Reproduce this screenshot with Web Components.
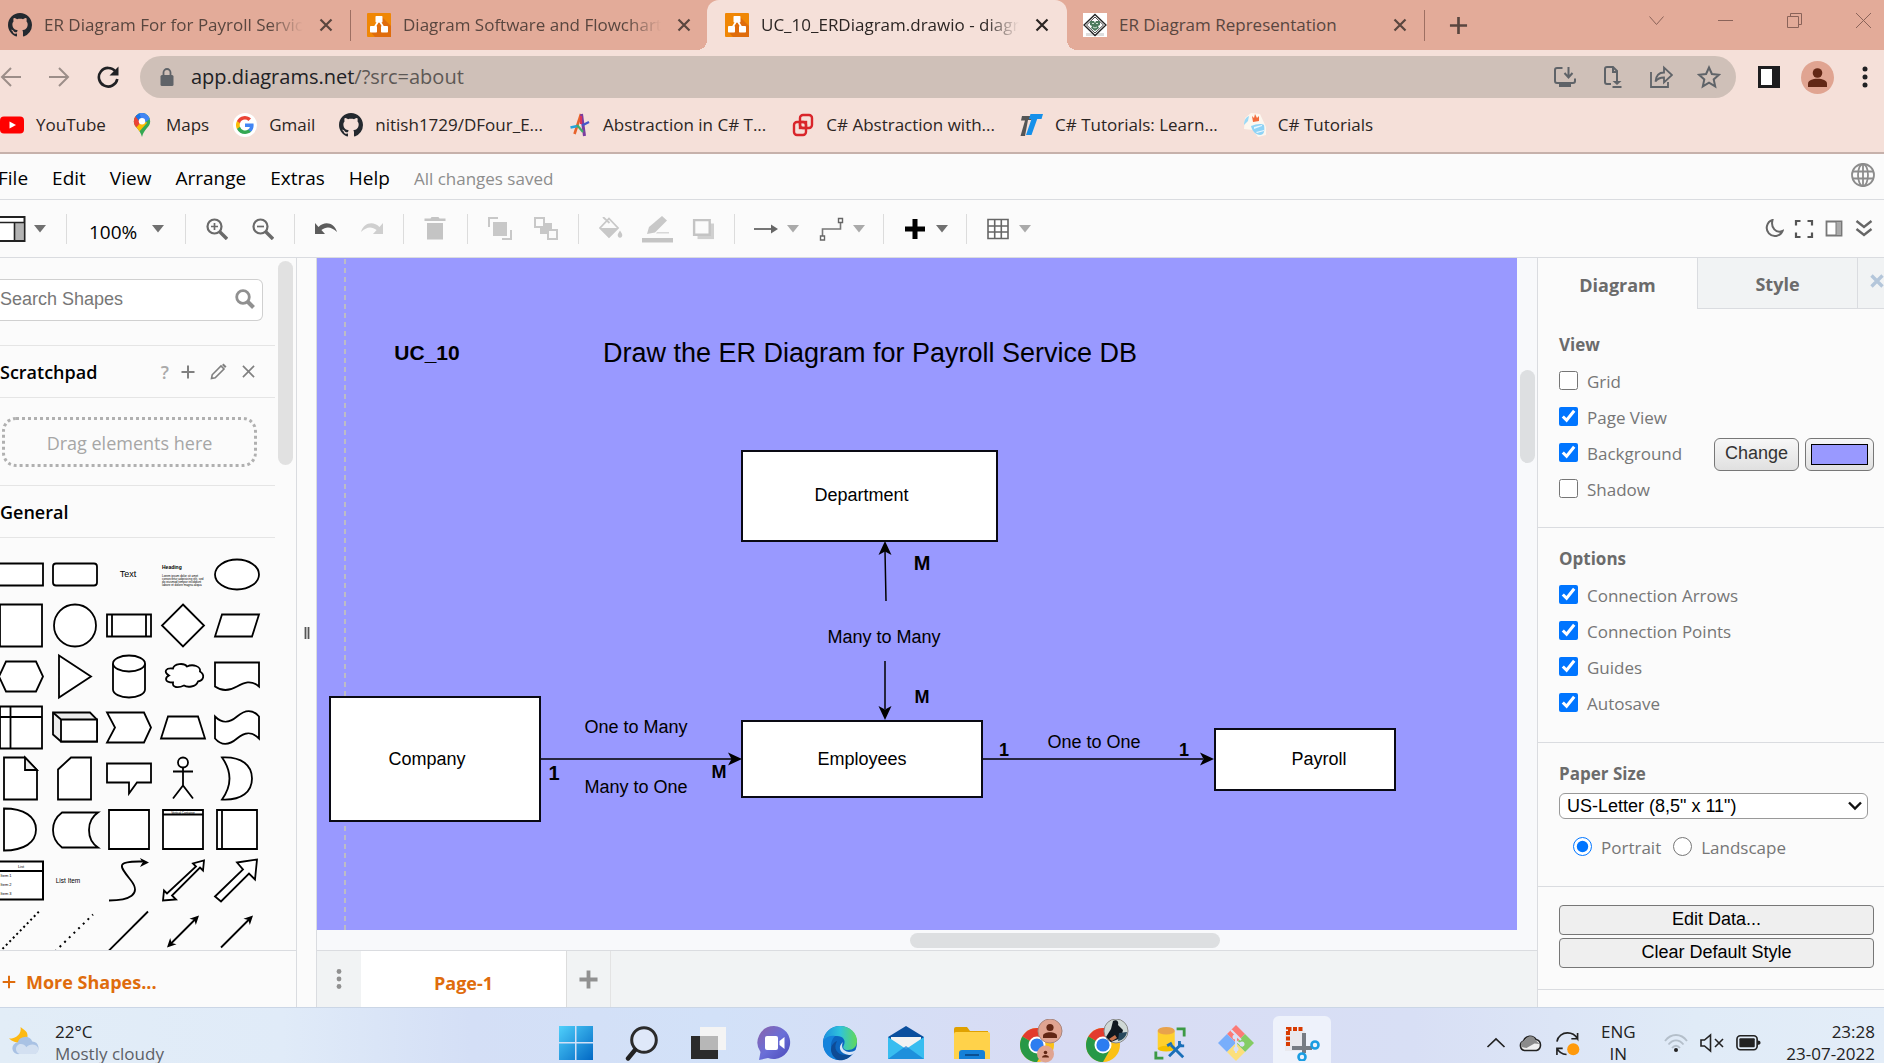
<!DOCTYPE html>
<html lang="en">
<head>
<meta charset="utf-8">
<title>UC_10_ERDiagram.drawio - diagrams.net</title>
<style>
  html, body { margin: 0; height: 100%; overflow: hidden; }
  body {
    --ui: "Open Sans", "Noto Sans", sans-serif;
    --arial: "Liberation Sans", Arial, sans-serif;
    --line: #dadce0;
    font-family: var(--ui);
    font-size: 17px;
    color: #000;
  }
</style>
</head>
<body>
<desktop-screen></desktop-screen>

<script>
const ICONS = {
  github: ['0 0 16 16', '<path fill="#24292f" d="M8 0C3.58 0 0 3.58 0 8c0 3.54 2.29 6.53 5.47 7.59.4.07.55-.17.55-.38 0-.19-.01-.82-.01-1.49-2.01.37-2.53-.49-2.69-.94-.09-.23-.48-.94-.82-1.13-.28-.15-.68-.52-.01-.53.63-.01 1.08.58 1.23.82.72 1.21 1.87.87 2.33.66.07-.52.28-.87.51-1.07-1.78-.2-3.64-.89-3.64-3.95 0-.87.31-1.59.82-2.15-.08-.2-.36-1.02.08-2.12 0 0 .67-.21 2.2.82.64-.18 1.32-.27 2-.27s1.36.09 2 .27c1.53-1.04 2.2-.82 2.2-.82.44 1.1.16 1.92.08 2.12.51.56.82 1.27.82 2.15 0 3.07-1.87 3.75-3.65 3.95.29.25.54.73.54 1.48 0 1.07-.01 1.93-.01 2.2 0 .21.15.46.55.38A8.01 8.01 0 0 0 16 8c0-4.42-3.58-8-8-8z"/>'],
  drawio: ['0 0 24 24', '<rect width="24" height="24" rx="1" fill="#f08705"/><path fill="#df6c0c" d="M14.5 3.500 24 13v11H8l-4.500-5 6-6z"/><path stroke="#fff" stroke-width="1.800" fill="none" d="m12 7-5.500 9M12 7l5.500 9"/><g fill="#fff"><rect x="8.500" y="3" width="7" height="6.500" rx=".8"/><rect x="3" y="13" width="7" height="6.500" rx=".8"/><rect x="14" y="13" width="7" height="6.500" rx=".8"/></g>'],
  erd: ['0 0 24 24', '<path fill="#fff" d="M0 0h24v24H0z"/><path fill="#ddd" d="M3 20h18v3H3z"/><path fill="#fff" stroke="#222" stroke-width="1.300" d="m12 1.500 11 10.500-11 10.500L1 12z"/><path fill="none" stroke="#444" d="m12 4 8.500 8-8.500 8-8.500-8z"/><path fill="#4c7a5c" d="M7 8h4l1 2 1-2h4v4l-2 1 1 2-4 3-4-3 1-2-2-1z"/><path fill="none" stroke="#cfe3d4" d="M9 10.500h2M13 10.500h2M10 14l2 1 2-1"/>'],
  youtube: ['0 0 24 24', '<rect x="0" y="3.500" width="24" height="17" rx="4" fill="#f00"/><path fill="#fff" d="m9.500 8.500 6.500 3.500-6.500 3.500z"/>'],
  maps: ['0 0 24 24', '<clipPath id="p"><path d="M12 0a8.200 8.200 0 0 0-8.200 8.200c0 6.300 6.300 7.300 8.200 15.800 1.900-8.500 8.200-9.500 8.200-15.800A8.200 8.200 0 0 0 12 0z"/></clipPath><g clip-path="url(#p)"><path fill="#34a853" d="M0 0h24v24H0z"/><path fill="#fbbc04" d="M2 14 12 3l5 7L7 21H0z"/><path fill="#ea4335" d="M0 2h7l5 6-7 8H0z"/><path fill="#1a73e8" d="M5 3 9-1h6l-5 10z"/><path fill="#4285f4" d="M9-1h9l3 6-8 6z"/></g><circle cx="12" cy="8.200" r="3.200" fill="#fff"/>'],
  google: ['0 0 24 24', '<circle cx="12" cy="12" r="12" fill="#fff"/><g transform="translate(3 3) scale(.75)"><path fill="#4285f4" d="M23.500 12.300c0-.8-.1-1.600-.2-2.300H12v4.500h6.500a5.500 5.500 0 0 1-2.400 3.600v3h3.900c2.200-2.100 3.500-5.200 3.500-8.800z"/><path fill="#34a853" d="M12 24c3.200 0 6-1.100 8-2.900l-3.900-3a7.200 7.200 0 0 1-10.800-3.800h-4v3.100A12 12 0 0 0 12 24z"/><path fill="#fbbc05" d="M5.300 14.300a7.200 7.200 0 0 1 0-4.600V6.600h-4a12 12 0 0 0 0 10.800z"/><path fill="#ea4335" d="M12 4.800c1.800 0 3.300.6 4.600 1.800L20 3.200A12 12 0 0 0 1.300 6.600l4 3.100A7.200 7.200 0 0 1 12 4.800z"/></g>'],
  alpha: ['0 0 24 24', '<path fill="none" stroke="#e8632c" stroke-width="2.600" d="M14 1 7.500 21"/><path fill="none" stroke="#7b3fa0" stroke-width="3" d="m14.500 1 3 22"/><path fill="none" stroke="#24a3dc" stroke-width="2.600" d="m3.500 14.500 7-1.500"/><path fill="none" stroke="#3fae6a" stroke-width="2.200" d="m10 12 6 7"/><path fill="none" stroke="#4558c9" stroke-width="2.200" d="M15 12.500 22 9"/><path fill="none" stroke="#d8375c" stroke-width="2.200" d="M14 3v8"/>'],
  redbox: ['0 0 24 24', '<g fill="none" stroke="#d9252a" stroke-width="2.400"><rect x="10" y="2" width="12" height="13" rx="3"/><rect x="4" y="9" width="12" height="13" rx="3"/><rect x="10" y="9" width="6" height="6"/></g>'],
  tt: ['0 0 24 24', '<path fill="#555" d="M3 3h11l-1.500 4h-3.500L6 23H1.500L6 7.500H2z"/><path fill="#1590ea" d="M11.500 1H24l-1.500 5h-4.300L12.500 22H7l5.500-16H10z"/>'],
  csharp: ['0 0 24 24', '<path fill="#fdf7ef" d="M3 5 9 0l9 1 6 13v8l-8 2-5-7-9-1z"/><path fill="#8fd3f6" d="M9 13c5-2 10-3 13-1 1 6 0 10-4 10s-8-4-9-9z"/><path fill="#f36c3d" d="m10 3 2 2 1-4 2 4 2-2v5l-6 1z"/><path fill="#9bdaf7" d="M2 12c0-5 2-8 5-9l-1 5z"/><path fill="#eaf7fe" d="M12 14l8-2v1l-8 3zM14 19l8-2v1l-7 2z"/>'],
  x: ['0 0 14 14', '<path stroke="currentColor" stroke-width="2.200" d="m1.500 1.500 11 11m0-11-11 11"/>'],
  boldx: ['0 0 14 14', '<path stroke="currentColor" stroke-width="3.400" d="m1.500 1.500 11 11m0-11-11 11"/>'],
  plus: ['0 0 20 20', '<path stroke="currentColor" stroke-width="2.800" d="M10 1v18M1 10h18"/>'],
  wchev: ['0 0 15 15', '<path fill="none" stroke="currentColor" d="m.5 3.500 7 8 7-8"/>'],
  wmin: ['0 0 15 15', '<path stroke="currentColor" d="M0 7.500h15"/>'],
  wmax: ['0 0 15 15', '<path fill="none" stroke="currentColor" d="M.5 3.500h11v11H.5zM3.500 3.500v-3h11v11h-3"/>'],
  wclose: ['0 0 15 15', '<path stroke="currentColor" d="m0 0 15 15m0-15L0 15"/>'],
  back: ['0 0 22 22', '<path fill="none" stroke="currentColor" stroke-width="2" d="M21 11H3m8-9-9 9 9 9"/>'],
  forward: ['0 0 22 22', '<path fill="none" stroke="currentColor" stroke-width="2" d="M1 11h18M11 2l9 9-9 9"/>'],
  reload: ['0 0 24 24', '<path fill="none" stroke="currentColor" stroke-width="2.600" d="M19.500 6.500A9.300 9.300 0 1 0 21.300 14"/><path fill="currentColor" d="M22.500 1.500v9h-9z"/>'],
  lock: ['0 0 14 18', '<path fill="currentColor" d="M2 7h10q1.500 0 1.500 1.500v8Q13.500 18 12 18H2Q.5 18 .5 16.500v-8Q.5 7 2 7z"/><path fill="none" stroke="currentColor" stroke-width="1.800" d="M3.500 8V4.500a3.500 3.500 0 0 1 7 0V8"/>'],
  install: ['0 0 24 24', '<path fill="none" stroke="currentColor" stroke-width="2" d="M9.500 3H4Q2 3 2 5v11q0 2 2 2h16q2 0 2-2v-2.500M15.500 2v10m-4-4 4 4.500 4-4.500"/><path fill="currentColor" d="M6 18h12v4H6z"/>'],
  docdown: ['0 0 24 24', '<path fill="none" stroke="currentColor" stroke-width="2" d="M10 19H6q-2 0-2-2V4q0-2 2-2h6l4 4v7M12 2v5h4"/><path fill="currentColor" d="M15 12h2v4h3.500L16 20l-4.500-4H15zM11.500 21h9v2h-9z"/>'],
  share: ['0 0 24 24', '<path fill="none" stroke="currentColor" stroke-width="1.800" d="M2 7v15h17v-5"/><path fill="none" stroke="currentColor" stroke-width="1.800" d="M6.500 16.500C7 11 10 7.500 15 7.500V2.500l8 7.500-8 7.500V12.500c-4 0-6.500 1-8.500 4z"/>'],
  star: ['0 0 24 24', '<path fill="none" stroke="currentColor" stroke-width="2" d="m12 2.500 2.900 6.500 7.100.7-5.300 4.700 1.500 7-6.200-3.700-6.200 3.700 1.500-7L2 9.700 9.100 9z"/>'],
  sidepanel: ['0 0 22 22', '<path fill="#1d1d1f" d="M0 0h22v22H0z"/><path fill="#fff" d="M3 3h11v16H3z"/>'],
  avatar: ['0 0 33 33', '<circle cx="16.500" cy="16.500" r="16.500" fill="#e0a491"/><circle cx="16.500" cy="12" r="4.800" fill="#622715"/><path fill="#622715" d="M7 26v-3.500c0-3 4.500-4.700 9.500-4.700s9.500 1.700 9.500 4.700V26z"/>'],
  dots: ['0 0 6 22', '<g fill="currentColor"><circle cx="3" cy="3" r="2.500"/><circle cx="3" cy="11" r="2.500"/><circle cx="3" cy="19" r="2.500"/></g>'],
  globe: ['0 0 24 24', '<g fill="none" stroke="#8c8c8c" stroke-width="1.800"><circle cx="12" cy="12" r="11"/><ellipse cx="12" cy="12" rx="5" ry="11"/><path d="M12 1v22M1.500 8.500h21M1.500 15.500h21" /></g>'],
  layout: ['0 0 26 26', '<path fill="#fff" stroke="#222" stroke-width="2" d="M-4 1h28.500v24H-4z"/><path fill="#b3b3b3" d="M15 7h8.500v17h-8.500z"/><path stroke="#222" stroke-width="1.600" d="M0 6.500h25M14.500 6.500V25"/>'],
  caret: ['0 0 12 8', '<path fill="currentColor" d="M0 0h12L6 7.500z"/>'],
  zoomin: ['0 0 22 22', '<circle cx="8.500" cy="8.500" r="7" fill="none" stroke="#6a6a6a" stroke-width="2.200"/><path stroke="#6a6a6a" stroke-width="3.400" d="m13.500 13.500 7.500 7.500"/><path stroke="#6a6a6a" stroke-width="1.700" d="M8.500 5v7M5 8.500h7"/>'],
  zoomout: ['0 0 22 22', '<circle cx="8.500" cy="8.500" r="7" fill="none" stroke="#6a6a6a" stroke-width="2.200"/><path stroke="#6a6a6a" stroke-width="3.400" d="m13.500 13.500 7.500 7.500"/><path stroke="#6a6a6a" stroke-width="1.700" d="M5 8.500h7"/>'],
  undo: ['0 0 24 24', '<path fill="#5c5c5c" d="M1 6v11h10l-3.600-4c5-4 10-3.500 15.600 2C20.500 6 11 3.500 4.500 10z"/>'],
  redo: ['0 0 24 24', '<path fill="#cfcfcf" d="M23 6v11H13l3.600-4C11.600 9 6.600 9.500 1 15 3.500 6 13 3.500 19.500 10z"/>'],
  trash: ['0 0 24 24', '<path fill="#c4c4c4" d="M1.500 1.500h6l1-1.500h7l1 1.500h6V4h-21zM4 6h16v16.500H4z"/>'],
  front: ['0 0 24 24', '<path fill="#c8c8c8" d="M5 5h14v14H5z"/><path fill="none" stroke="#c8c8c8" stroke-width="2" d="M10 1H1v9M14 22h9v-9"/>'],
  tback: ['0 0 24 24', '<path fill="#c8c8c8" d="M6 6h12v11H6z"/><path fill="#fbfbfb" stroke="#c8c8c8" stroke-width="2" d="M1 1h9v9H1zM14 13h9v9h-9z"/>'],
  fill: ['0 0 24 24', '<path fill="none" stroke="#c8c8c8" stroke-width="1.800" d="M4 0l6.500 6M10 1.500 19 11l-9 9-9-9z"/><path fill="#c8c8c8" d="M1 11h18l-9 9.500zM21 13.500c1.500 2.500 3 4 2 6-1 1.700-3 1.700-4 0-1-2 .5-3.500 2-6z"/>'],
  pen: ['0 0 32 28', '<path fill="#c8c8c8" d="m6 19 2-7L21 1l5 4.500-12 12z"/><path fill="#d8d8d8" d="M16 17h12v1.500H15z"/><path fill="#c4c4c4" d="M1 23h31v4.500H1z"/>'],
  shadow: ['0 0 24 24', '<path fill="#d0d0d0" d="M6 6h18v17H6z"/><path fill="#fbfbfb" stroke="#c4c4c4" stroke-width="2.600" d="M2.300 2.300h17v16h-17z"/>'],
  arrow: ['0 0 26 24', '<path stroke="#666" stroke-width="1.800" d="M1 12h19"/><path fill="#666" d="m18 7.500 7 4.500-7 4.500z"/>'],
  way: ['0 0 26 26', '<path fill="none" stroke="#777" stroke-width="1.600" d="M3.500 20v-7h18V6.500"/><path fill="#fff" stroke="#666" stroke-width="1.400" d="M1.500 20h4v4h-4zM19.500 2.500h4v4h-4z"/>'],
  bold: ['0 0 26 24', '<path stroke="#000" stroke-width="5" d="M13 2v20M3 12h20"/>'],
  table: ['0 0 26 24', '<path fill="#fff" stroke="#666" stroke-width="1.600" d="M3 2.500h20v19H3zM3 9h20M3 15h20M9.700 2.500v19M16.300 2.500v19"/>'],
  moon: ['0 0 20 20', '<path fill="none" stroke="#666" stroke-width="2" d="M8.500 1A8.200 8.200 0 1 0 18.500 12C12 14.500 6.500 9 8.500 1z"/>'],
  full: ['0 0 20 20', '<path fill="none" stroke="#555" stroke-width="2.200" d="M2 6.500V2h4.500M13.500 2H18v4.500M18 13.500V18h-4.500M6.500 18H2v-4.500"/>'],
  format: ['0 0 20 20', '<path fill="#fff" stroke="#777" stroke-width="1.800" d="M2.500 2.500h15v14h-15z"/><path fill="#aaa" stroke="#777" d="M12 2.500h5.500v14H12z"/>'],
  collapse: ['0 0 20 20', '<path fill="none" stroke="#666" stroke-width="2.400" d="m2.500 2 7.500 6 7.500-6M2.500 10l7.500 6 7.500-6"/>'],
  search: ['0 0 20 20', '<circle cx="8" cy="8" r="6.300" fill="none" stroke="#909090" stroke-width="2.800"/><path stroke="#909090" stroke-width="4" d="m12.500 12.500 6 6"/>'],
  thinplus: ['0 0 14 14', '<path stroke="#808080" stroke-width="2" d="M7 .5v13M.5 7h13"/>'],
  pencil: ['0 0 17 17', '<path fill="none" stroke="#808080" stroke-width="1.600" d="m1.500 15.500.7-3.700L11 3l3 3-8.800 8.800z"/><path fill="#808080" d="m12 2 1.500-1.500 3 3L15 5z"/>'],
  thinx: ['0 0 14 14', '<path stroke="#808080" stroke-width="1.800" d="m1 1 12 12m0-12L1 13"/>'],
  grip: ['0 0 6 12', '<path stroke="#555" stroke-width="1.800" d="M1.500 0v12M4.500 0v12"/>'],
  dotsgrey: ['0 0 6 22', '<g fill="#909090"><circle cx="3" cy="3.500" r="2.400"/><circle cx="3" cy="11" r="2.400"/><circle cx="3" cy="18.500" r="2.400"/></g>'],
  pageplus: ['0 0 20 20', '<path stroke="#919191" stroke-width="4" d="M10 .5v19M.5 10h19"/>'],
  selchev: ['0 0 14 10', '<path fill="none" stroke="#111" stroke-width="2.400" d="m1 1.500 6 6 6-6"/>'],
  weather: ['0 0 34 34', '<path fill="#fdb913" d="M13 2c4 4 8 4 7 11-1 6-11 8-19 1 8 0 13-5 12-12z"/><path fill="#a9c2e4" d="M11 30a6 6 0 0 1-1-12 8 8 0 0 1 15-1 6.700 6.700 0 0 1 2 13z"/><path fill="#d3e0f1" d="M12 30a5.500 5.500 0 0 1-1-10c3-1 6 0 8 3 3-4 11-4 12.500 2-.5 4-3 5-5.500 5z"/>'],
  windows: ['0 0 36 36', '<linearGradient id="w" x2="1" y2="1"><stop stop-color="#4fd0fb"/><stop offset="1" stop-color="#0268c4"/></linearGradient><path fill="url(#w)" d="M1 1h16v16H1zM18.500 1H35v16H18.500zM1 18.500h16V35H1zM18.500 18.500H35V35H18.500z"/>'],
  wsearch: ['0 0 36 36', '<circle cx="20" cy="15" r="12.300" fill="#e7edfa" fill-opacity=".6" stroke="#2b2b2b" stroke-width="3"/><path stroke="#222" stroke-width="4.400" stroke-linecap="round" d="m11 25-7 8.500"/>'],
  tasks: ['0 0 36 36', '<path fill="#2b2b2b" d="M1 11h27v23H1z"/><path fill="#f4f4f4" d="M10 2h26v23H10z"/><path fill="#b7b7b7" d="M10 11h18v14H10z"/>'],
  chat: ['0 0 36 36', '<linearGradient id="c" x2="1" y2="1"><stop stop-color="#8d62a8"/><stop offset=".5" stop-color="#6a6fd8"/><stop offset="1" stop-color="#4b48b8"/></linearGradient><path fill="url(#c)" d="M18 1a16.500 16.500 0 1 1-6 32l-9 2 1.500-8A16.500 16.500 0 0 1 18 1z"/><rect x="9" y="11" width="13" height="14" rx="2" fill="#fff"/><path fill="#fff" d="m23.500 16 5-4v12l-5-4z"/>'],
  edge: ['0 0 36 36', '<linearGradient id="e" x2="1"><stop stop-color="#1c8fe0"/><stop offset=".5" stop-color="#2fc3dc"/><stop offset="1" stop-color="#62d957"/></linearGradient><circle cx="18" cy="18" r="17" fill="#0c66c0"/><path fill="url(#e)" d="M1 17C2 7 9 1 18 1c10 0 17 7 17 15 0 6-4 9-9 9-4 0-6-2-4-5 2-5-1-9-7-9-7 0-12 2-14 6z"/><path fill="#1583dc" d="M1 18c1-5 6-8 12-7-6 6-6 18 5 24C8 35 1 28 1 18z"/><path fill="#0e4b95" d="M15 16c-5 9 2 17 15 13-3 5-9 7-14 6-8-4-10-15-1-19z"/><path fill="#d9e4f7" d="M21 17c-2 4-1 9 6 10 3 0 5-1 7-2-2 4-4 5-7 5-9-1-12-8-6-13z"/>'],
  mail: ['0 0 36 36', '<path fill="#0a4f9e" d="M0 12 18 1l18 11v6H0z"/><path fill="#f3f3f3" d="M3 12h30v12H3z"/><path fill="#38bdf0" d="m0 12 18 12 18-12v22H0z"/><path fill="#1682d6" d="m0 34 18-13 18 13z" opacity=".75"/>'],
  folder: ['0 0 36 36', '<path fill="#e0a100" d="M0 4q0-2 2-2h11l3 4h18v10H0z"/><path fill="#ffd24a" d="M0 9q0-2 2-2h32q2 0 2 2v25H0z"/><path fill="#1480d8" d="M5 34v-6q0-3 3-3h20q3 0 3 3v6z"/><path fill="#0b4f91" d="M11 29h14v2H11z"/>'],
  chromeA: ['0 0 44 44', '<g transform="translate(1 9)"><circle cx="17" cy="17" r="17" fill="#fbc116"/><path fill="#e33b2e" d="M17 17 2.300 8.500a17 17 0 0 1 29.400 0z"/><path fill="#279847" d="M17 17 2.300 8.500A17 17 0 0 0 17 34l8-14z"/><circle cx="17" cy="17" r="8.500" fill="#fff"/><circle cx="17" cy="17" r="6.600" fill="#2d7df0"/></g><circle cx="31" cy="12" r="12" fill="#e0a491" stroke="#a8877f"/><circle cx="31" cy="8.500" r="3.600" fill="#622715"/><path fill="#622715" d="M24 19v-2c0-5 14-5 14 0v2z"/><circle cx="26.500" cy="35" r="8.500" fill="#e0a491"/><circle cx="26.500" cy="33.500" r="1.800" fill="#622715"/><path fill="#622715" d="M23 38.500c0-3.500 7-3.500 7 0z"/>'],
  chromeB: ['0 0 44 44', '<g transform="translate(1 9)"><circle cx="17" cy="17" r="17" fill="#fbc116"/><path fill="#e33b2e" d="M17 17 2.300 8.500a17 17 0 0 1 29.400 0z"/><path fill="#279847" d="M17 17 2.300 8.500A17 17 0 0 0 17 34l8-14z"/><circle cx="17" cy="17" r="8.500" fill="#fff"/><circle cx="17" cy="17" r="6.600" fill="#2d7df0"/></g><circle cx="31" cy="12" r="12" fill="#cfd8d6" stroke="#888"/><path fill="#101820" d="M28 2c4-2 6 1 5 4l5 5-2 8-10 4-5-5 5-8z"/><path fill="#27485c" d="M34 14c3 0 5-1 8-1-1 5-4 8-9 9z"/><path fill="#c9744d" d="m24 20 6-4 2 3-5 3z"/>'],
  ssms: ['0 0 36 36', '<path fill="#ffd02e" d="M5 5h18v19H5z"/><ellipse cx="14" cy="24" rx="9" ry="3" fill="#f5c000"/><ellipse cx="14" cy="5" rx="9" ry="4" fill="#e8a24c"/><path fill="none" stroke="#3c9a45" stroke-width="3" d="M25 3h8v8M3 27v7h8"/><path stroke="#1a6fb8" stroke-width="3" d="m17 32 13-13M19 20l13 13"/><path fill="none" stroke="#1a6fb8" stroke-width="3" d="M15 21l5-3M28 16v5h5"/>'],
  git: ['0 0 36 36', '<path fill="#fb7a76" d="m18 0 9 9-9 9-9-9z"/><path fill="#78aefb" d="m9 9 9 9-9 9-9-9z"/><path fill="#83cc64" d="m27 9 9 9-9 9-9-9z"/><path fill="#fbdf7c" d="m18 18 9 9-9 9-9-9z"/><path fill="none" stroke="#d9e1f6" stroke-width="2" d="m13 5 10 10m-5 13V14m0 2 7 5"/><g fill="#d9e1f6"><circle cx="17" cy="12" r="2.500"/><circle cx="24" cy="19" r="2.500"/><circle cx="18" cy="24" r="2.500"/></g>'],
  snip: ['0 0 36 36', '<path fill="#e9e9ee" d="M1 6h20v20H1z"/><path fill="none" stroke="#d83b01" stroke-width="4" stroke-dasharray="4 1.500" d="M4 21V4h15"/><path stroke="#777c84" stroke-width="4" d="M20 8v20M8 23h20"/><g fill="none" stroke="#1b9de2" stroke-width="2.600"><circle cx="31" cy="20" r="3.500"/><circle cx="18" cy="32" r="3.500"/></g>'],
  tchev: ['0 0 20 20', '<path fill="none" stroke="#222" stroke-width="1.700" d="m1.500 14 8.500-8 8.500 8"/>'],
  cloud: ['0 0 24 18', '<path fill="#f0f0f0" stroke="#222" stroke-width="1.600" d="M6 16.500A5 5 0 0 1 5 7a7 7 0 0 1 12.500-1.500A5.700 5.700 0 0 1 18 16.500z"/><path fill="#8b8b8b" d="M2.500 9C4 6.500 6 7 8 4c4-3.500 8-1 9 2l4 4-5-.5L8 14l-5-1z"/>'],
  update: ['0 0 26 26', '<path fill="none" stroke="#222" stroke-width="1.700" d="M2 11C3 5 8 2 13 2c5 0 8 2 10.500 6V2m0 6H17M2 25v-7h6M2 18c2 4 5 6 10 6.500"/><circle cx="19" cy="19" r="6.300" fill="#ff9a0c"/>'],
  wifi: ['0 0 24 20', '<g fill="none" stroke="#b4bfca" stroke-width="1.800"><path d="M1 8c6-8 16-8 22 0M4.500 11.500c4.500-5.500 10.500-5.500 15 0M8 15c2.500-3 5.500-3 8 0"/></g><circle cx="12" cy="17" r="2" fill="#222"/>'],
  mute: ['0 0 24 20', '<path fill="none" stroke="#222" stroke-width="1.600" d="M1 7v6h3.500l6 5V2l-6 5zM15 6l8 8m0-8-8 8"/>'],
  battery: ['0 0 26 18', '<rect x="1" y="1.500" width="21" height="14.500" rx="3.500" fill="none" stroke="#222" stroke-width="1.700"/><rect x="3.500" y="4" width="16" height="9.500" rx="1" fill="#222"/><path fill="#222" d="M22.500 6.500q3 0 3 2.200t-3 2.200z"/>']
};

const define = (name, css, html) => customElements.define(name, class extends HTMLElement {
  constructor() {
    super();
    const root = this.attachShadow({ mode: 'open' });
    const t = document.createElement('template');
    t.innerHTML = `<style>*{box-sizing:border-box}${css}</style>` + (typeof html === 'function' ? html(this) : html);
    root.append(t.content.cloneNode(true));
  }
});

/* <ui-icon name w h> draws one glyph of the set above. */
customElements.define('ui-icon', class extends HTMLElement {
  connectedCallback() {
    if (this.shadowRoot) return;
    const root = this.attachShadow({ mode: 'open' });
    const [box, body] = ICONS[this.getAttribute('name')];
    const w = this.getAttribute('w') || 24, h = this.getAttribute('h') || w;
    root.innerHTML = `<style>:host{display:inline-flex;flex:none}svg{display:block}</style><svg width="${w}" height="${h}" viewBox="${box}" aria-hidden="true">${body}</svg>`;
  }
});

const BTN = 'button{border:0;background:none;padding:0;margin:0;font:inherit;color:inherit;display:flex;align-items:center;justify-content:center}';

/* ---------- browser ---------- */
define('browser-tab', `
  :host{display:flex;align-items:center;position:relative;flex:0 1 358px;min-width:0;height:50px;padding:0 18px 0 16px;gap:12px;color:#59463f}
  :host([first]){flex-basis:351px;padding-left:8px}
  :host([active]){flex-basis:360px;margin-left:-2px;padding-left:18px;background:#f5e0d9;color:#2b2523;border-radius:12px 12px 0 0;z-index:1}
  :host([active])::before,:host([active])::after{content:"";position:absolute;bottom:0;width:10px;height:10px}
  :host([active])::before{left:-10px;background:radial-gradient(circle at 0 0,transparent 10px,#f5e0d9 10px)}
  :host([active])::after{right:-10px;background:radial-gradient(circle at 100% 0,transparent 10px,#f5e0d9 10px)}
  .t{flex:1;overflow:hidden;white-space:nowrap;line-height:28px}
  :host([fade]) .t{-webkit-mask:linear-gradient(90deg,#000 calc(100% - 34px),transparent);mask:linear-gradient(90deg,#000 calc(100% - 34px),transparent)}
  .s{position:absolute;right:0;top:10px;height:31px;width:1px;background:#9d6f62;display:none}
  :host([rule]) .s{display:block}
  ${BTN} button{margin-left:4px}`,
  '<slot name="icon"></slot><span class="t"><slot></slot></span><button aria-label="Close tab"><ui-icon name="x" w="14"></ui-icon></button><span class="s"></span>');

define('tab-strip', `
  :host{display:flex;background:#e3ab99;height:50px;color:#59463f}
  ${BTN}
  .new{width:66px;flex:none}
  .win{margin-left:auto;display:flex;gap:54px;padding:0 13px 9px 0;align-items:center;color:#8a6359}`,
  `<browser-tab first rule fade><ui-icon slot="icon" name="github" w="24"></ui-icon>ER Diagram For for Payroll Service</browser-tab>
   <browser-tab fade><ui-icon slot="icon" name="drawio" w="24"></ui-icon>Diagram Software and Flowchart</browser-tab>
   <browser-tab active fade><ui-icon slot="icon" name="drawio" w="24"></ui-icon>UC_10_ERDiagram.drawio - diagrams.net</browser-tab>
   <browser-tab rule><ui-icon slot="icon" name="erd" w="24"></ui-icon>ER Diagram Representation</browser-tab>
   <button class="new" aria-label="New tab"><ui-icon name="plus" w="19"></ui-icon></button>
   <div class="win">
     <button aria-label="Search tabs"><ui-icon name="wchev" w="15"></ui-icon></button>
     <button aria-label="Minimize"><ui-icon name="wmin" w="15"></ui-icon></button>
     <button aria-label="Restore"><ui-icon name="wmax" w="15"></ui-icon></button>
     <button aria-label="Close"><ui-icon name="wclose" w="15"></ui-icon></button>
   </div>`);

define('address-bar', `
  :host{display:flex;align-items:center;background:#f5e0d9;height:48px;padding:6px 9px 0 0;color:#202124}
  ${BTN}
  .nav{display:flex;gap:26px;color:#9c8e89;margin-right:20px}
  .nav button:last-child{color:#202124}
  .pill{flex:1;height:42px;border-radius:21px;background:#cfc0b8;display:flex;align-items:center;padding:0 15px 0 20px;gap:24px;color:#5f6368}
  .url{flex:1;margin-left:-7px;font-size:20px;line-height:28px;color:#5d5855;white-space:nowrap}
  .url b{font-weight:400;color:#202124}
  .end{display:flex;align-items:center;gap:21px;margin-left:22px}
  .more{width:20px}`,
  `<div class="nav"><button aria-label="Back"><ui-icon name="back" w="22"></ui-icon></button><button aria-label="Forward"><ui-icon name="forward" w="22"></ui-icon></button><button aria-label="Reload"><ui-icon name="reload" w="24"></ui-icon></button></div>
   <div class="pill"><ui-icon name="lock" w="14" h="18"></ui-icon><span class="url"><b>app.diagrams.net</b>/?src=about</span>
     <button aria-label="Install"><ui-icon name="install"></ui-icon></button><button aria-label="Save page"><ui-icon name="docdown"></ui-icon></button><button aria-label="Share"><ui-icon name="share"></ui-icon></button><button aria-label="Bookmark"><ui-icon name="star"></ui-icon></button></div>
   <div class="end"><button aria-label="Side panel"><ui-icon name="sidepanel" w="22"></ui-icon></button><button aria-label="Profile"><ui-icon name="avatar" w="33"></ui-icon></button><button class="more" aria-label="Menu"><ui-icon name="dots" w="6" h="22"></ui-icon></button></div>`);

define('bookmark-link', `
  :host{display:block;flex:none}
  a{display:flex;align-items:center;gap:12px;color:#2b2523;text-decoration:none;line-height:24px;white-space:nowrap}`,
  el => `<a href="#"><ui-icon name="${el.getAttribute('icon')}" w="24"></ui-icon><slot></slot></a>`);

define('bookmarks-bar', `
  :host{display:flex;align-items:center;gap:24px;background:#f5e0d9;height:56px;border-bottom:2px solid #c6b1ab}`,
  `<bookmark-link icon="youtube">YouTube</bookmark-link><bookmark-link icon="maps">Maps</bookmark-link><bookmark-link icon="google">Gmail</bookmark-link><bookmark-link icon="github">nitish1729/DFour_E...</bookmark-link><bookmark-link icon="alpha">Abstraction in C# T...</bookmark-link><bookmark-link icon="redbox">C# Abstraction with...</bookmark-link><bookmark-link icon="tt">C# Tutorials: Learn...</bookmark-link><bookmark-link icon="csharp">C# Tutorials</bookmark-link>`);

/* ---------- editor chrome ---------- */
define('menu-bar', `
  :host{display:flex;align-items:center;height:46px;background:#fbfbfb;border-bottom:1px solid var(--line);padding:3px 9px 0 0;font-size:19px}
  ${BTN} button{line-height:28px}
  .m{display:flex;align-items:center;gap:24px;margin-left:-2px}
  .st{font-size:17px;color:#8d8d8d}
  .g{margin:0 0 6px auto}`,
  `<div class="m"><button>File</button><button>Edit</button><button>View</button><button>Arrange</button><button>Extras</button><button>Help</button><span class="st">All changes saved</span></div><button class="g" aria-label="Language"><ui-icon name="globe" w="24"></ui-icon></button>`);

define('tool-button', `
  :host{display:block;flex:none}
  ${BTN} button{width:46px;height:44px}
  :host([drop]) button{width:66px;gap:8px;color:#aaa}
  :host([dark]) button{color:#707070}`,
  el => `<button aria-label="${el.getAttribute('label')}"><ui-icon name="${el.getAttribute('icon')}" w="${el.getAttribute('w') || 24}" h="${el.getAttribute('h') || el.getAttribute('w') || 24}"></ui-icon>${el.hasAttribute('drop') ? '<ui-icon name="caret" w="12" h="8"></ui-icon>' : ''}</button>`);

define('tool-bar', `
  :host{display:flex;align-items:center;height:58px;background:#fbfbfb;border-bottom:1px solid var(--line)}
  ${BTN}
  i{flex:none;width:1px;height:30px;background:#dcdcdc;margin:0 8px}
  .lay{gap:8px;color:#707070;margin-right:12px}
  .zoom{font-size:19px;line-height:28px;gap:15px;padding:0 13px 0 14px;color:#000}
  .zoom span{padding-top:6px}
  .zoom ui-icon{color:#707070}
  .wide{margin:0 9px}
  .r{margin-left:auto;display:flex;gap:10px;padding-right:10px}`,
  `<button class="lay" aria-label="View"><ui-icon name="layout" w="26"></ui-icon><ui-icon name="caret" w="12" h="8"></ui-icon></button><i></i>
   <button class="zoom"><span>100%</span><ui-icon name="caret" w="12" h="8"></ui-icon></button><i></i>
   <tool-button icon="zoomin" w="22" label="Zoom in"></tool-button><tool-button icon="zoomout" w="22" label="Zoom out"></tool-button><i></i>
   <tool-button icon="undo" label="Undo"></tool-button><tool-button icon="redo" label="Redo"></tool-button><i></i>
   <tool-button icon="trash" label="Delete"></tool-button><i class="wide"></i>
   <tool-button icon="front" label="To front"></tool-button><tool-button icon="tback" label="To back"></tool-button><i class="wide"></i>
   <tool-button icon="fill" label="Fill colour"></tool-button><tool-button icon="pen" w="32" h="28" label="Line colour"></tool-button><tool-button icon="shadow" w="22" label="Shadow"></tool-button><i></i>
   <tool-button drop icon="arrow" w="26" h="24" label="Connection"></tool-button><tool-button drop icon="way" w="26" label="Waypoints"></tool-button><i></i>
   <tool-button drop dark icon="bold" w="26" h="24" label="Insert"></tool-button><i></i>
   <tool-button drop icon="table" w="26" h="24" label="Table"></tool-button>
   <div class="r"><button aria-label="Dark mode"><ui-icon name="moon" w="20"></ui-icon></button><button aria-label="Fullscreen"><ui-icon name="full" w="20"></ui-icon></button><button aria-label="Format"><ui-icon name="format" w="20"></ui-icon></button><button aria-label="Collapse"><ui-icon name="collapse" w="20"></ui-icon></button></div>`);

/* ---------- shape palette ---------- */
const head = (x, y, a) => `<path fill="#000" stroke="none" transform="translate(${x} ${y}) rotate(${a})" d="M0 0-9 4.500-6.500 0-9-4.500z"/>`;
const SHAPES = [
  '<path d="M-22-11h44v22h-44z"/>', '<rect x="-22" y="-11" width="44" height="22" rx="3"/>',
  '<text x="-1" y="2" font-size="9">Text</text>',
  '<g class="l"><text x="-21" y="-6" font-size="5" font-weight="700">Heading</text><g font-size="3" fill="#444"><text x="-21" y="2">Lorem ipsum dolor sit amet</text><text x="-21" y="5">consectetur adipisicing elit, sed</text><text x="-21" y="8">do eiusmod tempor incididunt</text><text x="-21" y="11">labore et dolore magna aliqua</text></g></g>',
  '<ellipse rx="22" ry="15"/>',
  '<path d="M-21-21h42v42h-42z"/>', '<circle r="21"/>', '<path d="M-22-11h44v22h-44zM-17-11v22M17-11v22"/>', '<path d="M0-21 21 0 0 21-21 0z"/>', '<path d="M-15-11h37l-7 22h-37z"/>',
  '<path d="M-15-15h30l7 15-7 15h-30l-7-15z"/>', '<path d="m-16-21 32 21-32 21z"/>', '<path d="M-16-13v26a16 8 0 0 0 32 0v-26"/><ellipse cy="-13" rx="16" ry="8"/>',
  '<path d="M-10-8c1-5 11-6 14-2 6-3 14 0 13 5 5 3 4 9-2 10-2 6-11 6-14 4-6 3-12 2-11-3-9 0-8-5-4-7-6-4-3-8 4-7z"/>', '<path d="M-22-14h44v24c-8-7-15-4-22 0s-15 5-22 0z"/>',
  '<path d="M-21-21h42v42h-42zM-21-10.500h42M-10.500-21v42"/>', '<path fill="#ececec" d="m-22-15 37 0 7 7v22h-36l-8-7z"/><path d="M-14-8h36v22h-36zM-22-15l8 7"/>', '<path d="M-22-15h37l7 15-7 15h-37l8-15z"/>', '<path d="M-15-11h30l7 22h-44z"/>', '<path d="M-22-11c8 8 15 6 22 0s15-8 22 0v22c-8-8-15-6-22 0s-15 8-22 0z"/>',
  '<path d="M-17-21H4l12 12.500V21h-33z"/><path fill="#ececec" d="M4-21v12.500h12z"/>', '<path d="M-4-21h20v42h-33V-9z"/>', '<path d="M-22-15h44V4H8L0 15V4h-22z"/>', '<circle cy="-16" r="5"/><path d="M0-11V7M-10-7h20M-10 20 0 7l10 13"/>', '<path d="M-15-21c20-1 30 8 30 21s-10 22-30 21c10-14 10-28 0-42z"/>',
  '<path d="M-17-21c20 0 32 8 32 21s-12 21-32 21z"/>', '<path d="M-13-17h36c-12 8-12 27 0 35h-36c-12-9-12-26 0-35z"/>', '<path d="M-20-19.500h40v39h-40z"/>', '<path d="M-20-19.500h40v39h-40zM-20-15h40"/><text y="-16" font-size="3">Vertical Container</text>', '<path d="M-20-19.500h40v39h-40zM-15-19.500v39"/>',
  '<path stroke-width="2" d="M-22-19h44v38h-44zM-22-9.500h44"/><g font-size="4" fill="#444"><text y="-12.500">List</text><text x="-15" y="-4">Item 1</text><text x="-15" y="5">Item 2</text><text x="-15" y="14">Item 3</text></g>', '<text x="-7" y="2" font-size="6.500" fill="#222">List Item</text>',
  '<path fill="none" d="M-20 20c20 0 33-6 22-20s-16-19 8-19h3"/>' + head(20, -18, 0), '<path d="m-20 20 1-10 3 3L13-14l-3-3 11-3-1 10-3-3L-11 15l4 4z"/>', '<path d="m-22 16 28-27-6-7 20-3-2 20-6-6-28 28z"/>',
  '<path stroke-dasharray="2 3" stroke-width="2" d="M-22 21 18-20"/>', '<path stroke-dasharray="2 4.500" stroke-width="2" d="M-20 20 18-17"/>', '<path d="m-21 20 40-40"/>', '<path d="m-12 12 24-24"/>' + head(16, -16, -45) + head(-16, 16, 135), '<path d="m-16 16 28-28"/>' + head(16, -16, -45)
];

define('shape-grid', `
  :host{display:block;flex:1;min-height:0;overflow:hidden;padding-top:11px}
  div{display:grid;grid-template-columns:repeat(5,54px);margin-left:-6px}
  svg{display:block}
  .s{fill:#fff;stroke:#000;stroke-width:1.800}
  text{stroke:none;fill:#000;text-anchor:middle;font-family:var(--arial)}
  .l text{text-anchor:start}`,
  () => '<div>' + SHAPES.map(s => `<svg width="54" height="51" viewBox="-27 -25.500 54 51"><g class="s">${s}</g></svg>`).join('') + '</div>');

define('palette-header', `
  :host{display:flex;align-items:center;height:53px;border:1px solid #e5e5e5;border-width:1px 0;margin-right:21px;padding-right:20px;font-size:18px;font-weight:600}
  .a{margin-left:auto;display:flex;align-items:center;gap:15px;color:#aaa}`,
  '<span><slot></slot></span><div class="a"><slot name="actions"></slot></div>');

define('shape-palette', `
  :host{display:flex;flex-direction:column;width:297px;flex:none;background:#fbfbfb;border-right:1px solid var(--line);position:relative}
  ${BTN}
  .q{display:flex;align-items:center;height:42px;margin:21px 33px 24px 0;border:1px solid #d0d0d0;border-left:0;border-radius:0 6px 6px 0;background:#fff;padding:0 7px 2px 0}
  input{flex:1;min-width:0;border:0;outline:0;background:none;padding:0;font:18px var(--arial)}
  input::placeholder{color:#777;opacity:1}
  .drop{margin:19px 39px 18px 2px;height:50px;border:3px dotted #b0b0b0;border-radius:14px;display:flex;align-items:center;justify-content:center;color:#a6a6a6;font-size:18px;padding-top:1px}
  .bar{position:absolute;right:3px;top:3px;width:15px;height:204px;border-radius:8px;background:#e1e1e1}
  .q2{font-weight:600}
  .more{border-top:1px solid var(--line);height:57px;display:flex;align-items:center;color:#df6c0c}
  .more button{font-weight:700;font-size:18px;gap:10px;padding:5px 0 0 2px}`,
  `<label class="q"><input type="text" placeholder="Search Shapes" aria-label="Search Shapes"><ui-icon name="search" w="20"></ui-icon></label>
   <palette-header>Scratchpad<span slot="actions" class="q2">?</span><button slot="actions" aria-label="Add" style="margin-left:-3px"><ui-icon name="thinplus" w="14"></ui-icon></button><button slot="actions" aria-label="Edit"><ui-icon name="pencil" w="17"></ui-icon></button><button slot="actions" aria-label="Close"><ui-icon name="thinx" w="13"></ui-icon></button></palette-header>
   <div class="drop">Drag elements here</div>
   <palette-header>General</palette-header>
   <shape-grid></shape-grid>
   <div class="more"><button><ui-icon name="plus" w="14"></ui-icon>More Shapes...</button></div>
   <div class="bar"></div>`);

/* ---------- diagram ---------- */
define('er-node', `
  :host{position:absolute;display:flex;align-items:center;justify-content:center;background:#fff;border:2px solid #0a0a14;font:18px var(--arial)}`, '<slot></slot>');
define('er-label', `
  :host{position:absolute;transform:translate(-50%,-50%);white-space:nowrap;font:18px/22px var(--arial)}
  :host([bold]){font-weight:700}
  :host([size="m"]){font-size:20px}
  :host([size="l"]){font-size:21px}
  :host([size="xl"]){font-size:27px;line-height:32px}`, '<slot></slot>');

define('diagram-canvas', `
  :host{display:block;position:relative;flex:1;min-width:0;background:#9999ff;overflow:hidden}
  svg{position:absolute;left:0;top:0}
  .m{fill:#000;stroke:none}`,
  () => {
    const tip = (x, y, a) => `<path class="m" transform="translate(${x} ${y}) rotate(${a})" d="M0 0-14 6.500-10.500 0-14-6.500z"/>`;
    const node = (x, y, w, h, t, pad = '') => `<er-node style="left:${x}px;top:${y}px;width:${w}px;height:${h}px;${pad}">${t}</er-node>`;
    const label = (x, y, t, a = '') => `<er-label ${a} style="left:${x}px;top:${y}px">${t}</er-label>`;
    return `<svg width="100%" height="100%" fill="none" stroke="#000" stroke-width="1.500">
      <path stroke="#bcbcc6" stroke-width="2" stroke-dasharray="5 4" d="M28 1v700"/>
      <path d="M223 501h192M666 501h220M569 343l-1-50M568 403v48"/>
      ${tip(425, 501, 0)}${tip(897, 501, 0)}${tip(568, 283, -90)}${tip(568, 462, 90)}</svg>` +
      node(12, 438, 212, 126, 'Company', 'padding-right:16px') + node(424, 192, 257, 92, 'Department', 'padding:0 16px 2px 0') +
      node(424, 462, 242, 78, 'Employees') + node(897, 470, 182, 63, 'Payroll', 'padding-left:28px') +
      label(110, 95, 'UC_10', 'bold size="l"') + label(553, 95, 'Draw the ER Diagram for Payroll Service DB', 'size="xl"') +
      label(319, 469, 'One to Many') + label(319, 529, 'Many to One') + label(567, 379, 'Many to Many') + label(777, 484, 'One to One') +
      label(237, 515, '1', 'bold size="m"') + label(402, 514, 'M', 'bold') + label(605, 305, 'M', 'bold size="m"') + label(605, 439, 'M', 'bold') +
      label(687, 492, '1', 'bold') + label(867, 492, '1', 'bold');
  });

define('page-tabs', `
  :host{display:flex;height:57px;background:#f1f3f4;border-top:1px solid var(--line)}
  ${BTN}
  .d{width:44px}
  .p{width:206px;background:#fff;border-right:1px solid #dcdcdc;color:#df6c0c;font-weight:700;font-size:18px;padding-top:8px}
  .n{width:44px;border-right:1px solid #e3e3e3}`,
  `<button class="d" aria-label="Pages"><ui-icon name="dotsgrey" w="6" h="22"></ui-icon></button><button class="p">Page-1</button><button class="n" aria-label="Insert page"><ui-icon name="pageplus" w="19"></ui-icon></button>`);

define('diagram-workspace', `
  :host{display:flex;flex:1;min-width:0}
  .split{width:20px;flex:none;background:#fbfbfb;border-right:1px solid var(--line);display:flex;align-items:center;justify-content:center}
  .col{flex:1;min-width:0;display:flex;flex-direction:column;background:#f8f9fb}
  .row{flex:1;min-height:0;display:flex}
  .v{width:20px;padding:112px 2px 0 3px}
  .v div{height:93px;border-radius:8px;background:#dddfe1}
  .h{height:20px;padding:3px 26% 2px 49%;margin-left:-5px}
  .h div{height:15px;border-radius:8px;background:#dddfe1}`,
  `<div class="split"><ui-icon name="grip" w="6" h="12"></ui-icon></div>
   <div class="col"><div class="row"><diagram-canvas></diagram-canvas><div class="v"><div></div></div></div><div class="h"><div></div></div><page-tabs></page-tabs></div>`);

/* ---------- format panel ---------- */
define('option-row', `
  :host{display:flex;align-items:center;height:36px}
  :host([type="radio"]){margin-right:12px}
  label{display:flex;align-items:center;gap:9px;color:#767676;line-height:24px}
  input{width:19px;height:19px;margin:0 0 3px;accent-color:#0075ff}
  .e{margin-left:auto;display:flex;gap:6px}`,
  el => `<label><input type="${el.getAttribute('type') || 'checkbox'}" name="o" ${el.hasAttribute('on') ? 'checked' : ''}><span><slot></slot></span></label><div class="e"><slot name="end"></slot></div>`);

define('format-section', `
  :host{display:block;border-bottom:1px solid var(--line);padding:12px 10px 20px 21px}
  h2{margin:0;font-size:17px;line-height:38px;color:#6b6b6b;font-weight:700}`,
  el => (el.hasAttribute('heading') ? `<h2>${el.getAttribute('heading')}</h2>` : '') + '<slot></slot>');

define('format-panel', `
  :host{display:flex;flex-direction:column;width:347px;flex:none;background:#fbfbfb;border-left:1px solid var(--line);overflow:hidden}
  ${BTN}
  .tabs{display:flex;height:51px;flex:none;color:#6b6b6b;font-size:18px}
  .tabs button{font-weight:700;padding-top:2px}
  .tabs .a{width:160px}
  .tabs .b{width:162px;background:#f1f3f4;border:1px solid var(--line);border-width:0 1px 1px}
  .tabs .c{flex:1;background:#f1f3f4;border-bottom:1px solid var(--line);padding:0 0 4px 12px;justify-content:flex-start;color:#b4c6da}
  .first{padding:17px 10px 19px 21px}
  .last{padding:18px 10px 18px 21px}
  .g{height:33px;border:1px solid #777;border-radius:6px;background:linear-gradient(#f7f7f7,#e0e0e0);font:18px var(--arial);color:#333;padding:0 10px 2px}
  .g.c{width:69px;padding:0 5px}
  .g.c span{width:58px;height:21px;background:#99f;border:1px solid #000}
  .sel{position:relative;margin-right:6px;display:block}
  .sel ui-icon{position:absolute;right:6px;top:8px;pointer-events:none}
  select{appearance:none;display:block;width:100%;height:26px;border:1px solid #999;border-radius:6px;background:#fff;font:18px var(--arial);padding:0 7px;color:#000}
  .rad{display:flex;padding:11px 0 0 14px;height:47px}
  .w{display:flex;width:100%;height:30px;border:1px solid #777;border-radius:4px;background:#efefef;font:18px var(--arial);padding-bottom:2px;margin-bottom:3px}`,
  `<div class="tabs"><button class="a">Diagram</button><button class="b">Style</button><button class="c" aria-label="Close"><ui-icon name="boldx" w="14"></ui-icon></button></div>
   <format-section class="first" heading="View"><option-row>Grid</option-row><option-row on>Page View</option-row><option-row on>Background<button slot="end" class="g">Change</button><button slot="end" class="g c" aria-label="Background colour"><span></span></button></option-row><option-row>Shadow</option-row></format-section>
   <format-section heading="Options"><option-row on>Connection Arrows</option-row><option-row on>Connection Points</option-row><option-row on>Guides</option-row><option-row on>Autosave</option-row></format-section>
   <format-section heading="Paper Size"><label class="sel"><select aria-label="Paper Size"><option>US-Letter (8,5" x 11")</option></select><ui-icon name="selchev" w="14" h="10"></ui-icon></label>
     <div class="rad"><option-row type="radio" on>Portrait</option-row><option-row type="radio">Landscape</option-row></div></format-section>
   <format-section class="last"><button class="w">Edit Data...</button><button class="w">Clear Default Style</button></format-section>`);

/* ---------- taskbar ---------- */
define('task-bar', `
  :host{display:block;height:56px;overflow:hidden;color:#222;background:linear-gradient(90deg,#e2edf7 0,#e0ebf8 15%,#d4dff6 25%,#d2e1f8 38%,#d8dcf4 55%,#d8dff5 75%,#e0ebf7 90%,#e3edf8);border-top:1px solid #cbd6e6}
  ${BTN}
  .in{height:70px;display:grid;grid-template-columns:1fr auto 1fr;align-items:center;padding-right:7px}
  .w{display:flex;align-items:center;gap:14px;padding-left:8px;line-height:22px;text-align:left;justify-self:start}
  .w ui-icon{margin-bottom:4px}
  .w small{display:block;font-size:17px;color:#5c6066}
  .apps{display:flex}
  .apps button{width:66px;height:56px}
  .apps .up{padding:0 0 4px 6px}
  .apps .on ui-icon{padding:9px 11px;border-radius:6px;background:#eef2fb}
  .tray{justify-self:end;display:flex;align-items:center;padding-right:2px;line-height:22px}
  .tray .i{display:flex;align-items:center;gap:12px}
  .eng{width:58px;text-align:center;margin:0 17px 0 9px}
  .time{text-align:right;margin-left:25px;white-space:nowrap}`,
  () => {
    const app = (n, l, s = 36, c = '') => `<button class="${c}" aria-label="${l}"><ui-icon name="${n}" w="${s}"></ui-icon></button>`;
    return `<div class="in"><button class="w"><ui-icon name="weather" w="33"></ui-icon><span>22°C<small>Mostly cloudy</small></span></button>
    <div class="apps">${app('windows', 'Start')}${app('wsearch', 'Search')}${app('tasks', 'Task view')}${app('chat', 'Chat')}${app('edge', 'Edge')}${app('mail', 'Mail')}${app('folder', 'Files')}${app('chromeA', 'Chrome', 44, 'up')}${app('chromeB', 'Chrome', 44, 'up')}${app('ssms', 'SQL tools', 34)}${app('git', 'Git')}${app('snip', 'Snip', 36, 'on')}</div>
    <div class="tray"><div class="i"><ui-icon name="tchev" w="20"></ui-icon><ui-icon name="cloud" w="25" h="18"></ui-icon><ui-icon name="update" w="25"></ui-icon></div><div class="eng">ENG<br>IN</div><div class="i"><ui-icon name="wifi" w="24" h="20"></ui-icon><ui-icon name="mute" w="24" h="20"></ui-icon><ui-icon name="battery" w="25" h="18"></ui-icon></div><div class="time">23:28<br>23-07-2022</div></div></div>`;
  });

define('desktop-screen', `
  :host{display:flex;flex-direction:column;height:100vh;overflow:hidden}
  main{flex:1;min-height:0;display:flex}`,
  `<tab-strip></tab-strip><address-bar></address-bar><bookmarks-bar></bookmarks-bar><menu-bar></menu-bar><tool-bar></tool-bar>
   <main><shape-palette></shape-palette><diagram-workspace></diagram-workspace><format-panel></format-panel></main><task-bar></task-bar>`);
</script>
</body>
</html>
